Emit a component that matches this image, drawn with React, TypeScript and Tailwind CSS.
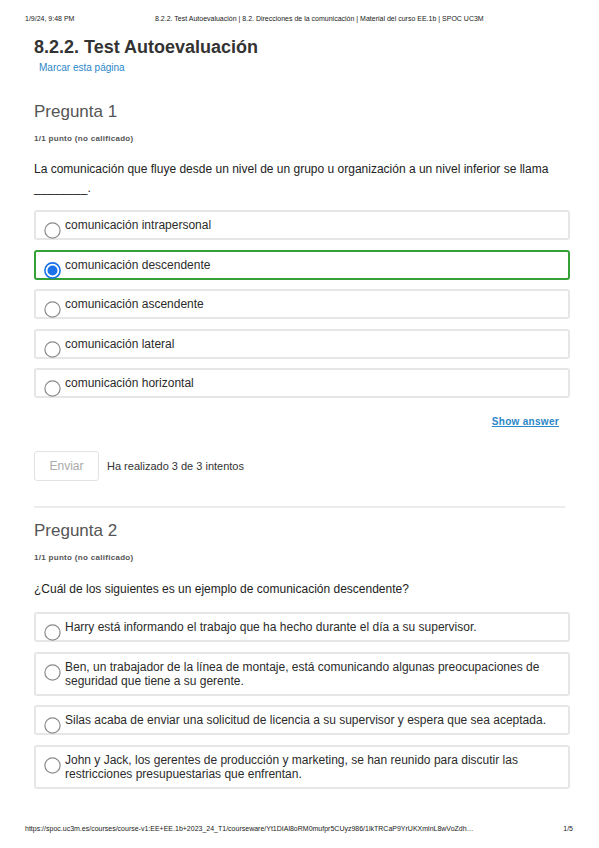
import React from "react";

const q1Options = [
  "comunicación intrapersonal",
  "comunicación descendente",
  "comunicación ascendente",
  "comunicación lateral",
  "comunicación horizontal",
];

const q2Options = [
  "Harry está informando el trabajo que ha hecho durante el día a su supervisor.",
  "Ben, un trabajador de la línea de montaje, está comunicando algunas preocupaciones de seguridad que tiene a su gerente.",
  "Silas acaba de enviar una solicitud de licencia a su supervisor y espera que sea aceptada.",
  "John y Jack, los gerentes de producción y marketing, se han reunido para discutir las restricciones presupuestarias que enfrentan.",
];

const Radio = ({ checked }: { checked?: boolean }) => (
  <svg width="17" height="17" viewBox="0 0 17 17" className="mt-[4px] mb-[-7px] mr-[4px] shrink-0">
    {checked ? (
      <>
        <circle cx="8.5" cy="8.5" r="7.6" fill="#fff" stroke="#1a73e8" strokeWidth="1.6" />
        <circle cx="8.5" cy="8.5" r="5" fill="#1a73e8" />
      </>
    ) : (
      <circle cx="8.5" cy="8.5" r="7.6" fill="#fff" stroke="#8a8a8a" strokeWidth="1.2" />
    )}
  </svg>
);

const Option = ({ text, checked }: { text: string; checked?: boolean }) => (
  <div
    className={
      checked
        ? "flex items-start border-2 border-[#35a035] rounded-[3px] pl-[8px] pr-[10px] py-[6px]"
        : "flex items-start border-2 border-[#e6e6e6] rounded-[3px] pl-[8px] pr-[10px] py-[6px]"
    }
  >
    <Radio checked={checked} />
    <div className="text-[12px] leading-[14px] text-[#2b2b2b]">{text}</div>
  </div>
);

export default function App() {
  return (
    <div className="bg-white w-[599px] h-[848px] flex flex-col" style={{ fontFamily: '"Liberation Sans", Arial, sans-serif' }}>
      {/* print header */}
      <div className="flex pl-[25px] pt-[15px] text-[7px] leading-[8px] text-[#222]">
        <span className="w-[130px]">1/9/24, 9:48 PM</span>
        <span>8.2.2. Test Autoevaluación | 8.2. Direcciones de la comunicación | Material del curso EE.1b | SPOC UC3M</span>
      </div>

      <div className="pl-[34px] w-[570px]">
        <h1 className="mt-[13px] text-[18px] leading-[22px] font-bold text-[#333]">8.2.2. Test Autoevaluación</h1>
        <div className="mt-[4px] pl-[5px] text-[10px] leading-[12px] text-[#2a87c8]">Marcar esta página</div>

        {/* Pregunta 1 */}
        <h2 className="mt-[28px] text-[17px] leading-[20px] text-[#555]">Pregunta 1</h2>
        <div className="mt-[12px] text-[8px] leading-[10px] font-bold text-[#555] tracking-[0.3px]">1/1 punto (no calificado)</div>
        <p className="mt-[16px] text-[12px] leading-[19px] text-[#222]">
          La comunicación que fluye desde un nivel de un grupo u organización a un nivel inferior se llama
          <br />
          ________.
        </p>
        <div className="mt-[12px] flex flex-col gap-[9.5px]">
          {q1Options.map((o, i) => (
            <Option key={o} text={o} checked={i === 1} />
          ))}
        </div>
        <div className="mt-[18px] flex justify-end pr-[11px]">
          <span className="text-[10px] leading-[12px] font-bold text-[#2a87c8] underline tracking-[0.3px]">Show answer</span>
        </div>
        <div className="mt-[23px] flex items-center gap-[8px]">
          <div className="w-[65px] h-[30px] border border-[#e2e2e2] rounded-[3px] flex items-center justify-center text-[12px] text-[#aaa]">
            Enviar
          </div>
          <span className="text-[11px] text-[#333]">Ha realizado 3 de 3 intentos</span>
        </div>
        <div className="mt-[25px] h-[2px] bg-[#ececec] w-[531px]" />

        {/* Pregunta 2 */}
        <h2 className="mt-[13px] text-[17px] leading-[20px] text-[#555]">Pregunta 2</h2>
        <div className="mt-[12px] text-[8px] leading-[10px] font-bold text-[#555] tracking-[0.3px]">1/1 punto (no calificado)</div>
        <p className="mt-[17px] text-[12px] leading-[19px] text-[#222]">
          ¿Cuál de los siguientes es un ejemplo de comunicación descendente?
        </p>
        <div className="mt-[13px] flex flex-col gap-[9.5px]">
          {q2Options.map((o) => (
            <Option key={o} text={o} />
          ))}
        </div>
      </div>

      {/* print footer */}
      <div className="mt-auto mb-[15px] flex pl-[25px] pr-[26px] text-[7px] leading-[8px] text-[#222]">
        <span>https://spoc.uc3m.es/courses/course-v1:EE+EE.1b+2023_24_T1/courseware/Yt1DIAl8oRM0mufpr5CUyz986/1lkTRCaP9YrUKXmlnL8wVoZdh…</span>
        <span className="ml-auto">1/5</span>
      </div>
    </div>
  );
}
